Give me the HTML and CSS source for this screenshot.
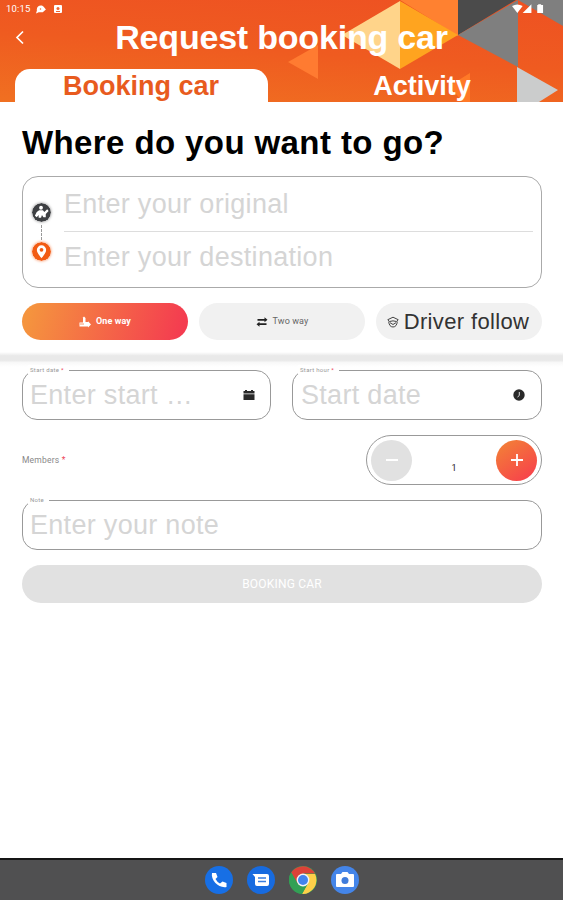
FILE: index.html
```html
<!DOCTYPE html>
<html lang="en">
<head>
<meta charset="utf-8">
<title>Request booking car</title>
<link rel="stylesheet" href="styles.css">
</head>
<body>
<div class="screen">
  <header class="header">
    <svg class="pattern" viewBox="0 0 563 102" aria-hidden="true">
      <path fill="#ff8130" d="M400 0H458V36Z"/>
      <path fill="#ffd48a" d="M400 1V69L342 35Z"/>
      <path fill="#ffa41f" d="M400 1L458 35L400 69Z"/>
      <path fill="#4b4b4b" d="M458 0H516L458 35Z"/>
      <path fill="#7f7f7f" d="M518 0V67L458 35Z"/>
      <path fill="#7f7f7f" d="M518 0H563V26Z"/>
      <path fill="#cbcccc" d="M517 67L558 90L539 102H517Z"/>
      <path fill="#ff7b31" d="M318 45V79L288 62Z"/>
      <path fill="#ff7927" d="M470 73V102H463L449 86Z"/>
    </svg>
    <div class="status">
      <span class="time">10:15</span>
      <svg class="chat" viewBox="0 0 12 10"><path fill="#fff" d="M1 9.500L2 6C1 1 7-1 9.500 2L12 5L8.500 8H4Z"/><circle cx="6" cy="4.500" r=".8" fill="#ef6331"/></svg>
      <svg class="app" viewBox="0 0 8 8"><rect width="8" height="8" rx="1" fill="#fff"/><circle cx="4" cy="3.400" r="1.500" fill="#ef6331"/><path stroke="#ef6331" d="M2 6.500H6"/></svg>
      <svg class="signals" viewBox="0 0 34 10"><path fill="#fff" d="M0 2Q5.500-1.500 11 2L5.500 9ZM20 0V9H11ZM26 1H27V0H30V1H32V9H26Z"/></svg>
    </div>
    <div class="titlebar">
      <svg class="back" viewBox="0 0 10 14"><path d="M8 1L2 7L8 13" fill="none" stroke="#fff" stroke-width="1.700"/></svg>
      <h1>Request booking car</h1>
    </div>
    <nav class="tabs">
      <a class="tab active">Booking car</a>
      <a class="tab">Activity</a>
    </nav>
  </header>

  <main>
    <section class="trip">
      <h2>Where do you want to go?</h2>
      <div class="route">
        <div class="markers">
          <svg class="marker dark" viewBox="0 0 20 20"><circle cx="10" cy="10" r="10" fill="#3d3f42"/><circle cx="9.500" cy="5" r="2" fill="#fff"/><path fill="#fff" d="M7.500 7.500H11.500L13 9.500L16 6.500L17.500 8.500L14.500 11.500V15H12L10.500 12.500L9.500 15.500H7V12.500L5 15L3 13.500L5 9.500Z"/></svg>
          <i class="dash"></i>
          <svg class="marker orange" viewBox="0 0 20 20"><circle cx="10" cy="10" r="10" fill="#f25b13"/><path fill="#fff" fill-rule="evenodd" d="M10 3.500A4.900 4.900 0 0 0 5.100 8.400C5.100 11.700 10 17 10 17S14.900 11.700 14.900 8.400A4.900 4.900 0 0 0 10 3.500ZM10 6.200A2 2 0 1 1 10 10.200A2 2 0 1 1 10 6.200Z"/></svg>
        </div>
        <div class="places">
          <div class="place">Enter your original</div>
          <div class="place">Enter your destination</div>
        </div>
      </div>
      <div class="modes">
        <div class="mode selected"><svg class="mode-icon" viewBox="0 0 12 12"><path fill="#fff" d="M3.500 2L5 .5L6.500 2V6H9V5.200L12 8.500L9 11.500V10.500H.5V6.500H4V2Z"/><path d="M1 8H5" stroke="#f47b43" stroke-width=".8"/></svg>One way</div>
        <div class="mode"><svg class="mode-icon" viewBox="0 0 12 12"><path d="M1.500 3.800H9.500M2.500 8.200H10.500" stroke="#222" stroke-width="1.800"/><path fill="#222" d="M8.500 1.300L11.500 3.800L8.500 6.300ZM3.500 5.700L.5 8.200L3.500 10.700Z"/></svg>Two way</div>
        <div class="mode driver"><svg class="mode-icon" viewBox="0 0 12 12"><path d="M.8 3.700L6 1.200L11.200 3.700L9.500 5.500Q6 4.200 2.500 5.500ZM1.700 5.500C2 9 3.500 11 6 11S10 9 10.300 5.500M3 6.700L6 8.500L9 6.700" fill="none" stroke="#444" stroke-width="1"/></svg>Driver follow</div>
      </div>
    </section>

    <div class="divider"></div>

    <section class="details">
      <div class="pair">
        <div class="field"><span class="label">Start date <b>*</b></span><span>Enter start …</span>
          <svg class="field-icon" viewBox="0 0 12 12"><path fill="#292929" d="M2 1H4V2H8V1H10V2H11.500V4.500H.5V2H2ZM.5 5.200H11.500V11H.5Z"/></svg></div>
        <div class="field"><span class="label">Start hour <b>*</b></span><span>Start date</span>
          <svg class="field-icon" viewBox="0 0 12 12"><circle cx="6" cy="6" r="5.700" fill="#292929"/><path d="M6.300 3V6.500L4.500 8" fill="none" stroke="#ddd"/></svg></div>
      </div>
      <div class="members">
        <span class="members-label">Members <b>*</b></span>
        <div class="stepper">
          <span class="step minus"><svg viewBox="0 0 14 14"><path d="M1 7H13" stroke="#fff" stroke-width="2"/></svg></span>
          <span class="count">1</span>
          <span class="step plus"><svg viewBox="0 0 14 14"><path d="M1 7H13M7 1V13" stroke="#fff" stroke-width="1.800"/></svg></span>
        </div>
      </div>
      <div class="field note"><span class="label">Note</span><span>Enter your note</span></div>
      <div class="submit">BOOKING CAR</div>
    </section>
  </main>

  <footer class="dock">
    <svg viewBox="0 0 28 28"><circle cx="14" cy="14" r="14" fill="#176fe5"/><path fill="#fff" d="M7 7H11L12.500 11L10.500 13Q12 16 15 17.500L17.500 15.500L21.500 17V21C14 22.500 5.500 14.500 7 7Z"/></svg>
    <svg viewBox="0 0 28 28"><circle cx="14" cy="14" r="14" fill="#176be0"/><path fill="#fff" d="M5.500 8H20Q22 8 22 10V18Q22 20 20 20H10Q8 20 8 18V11Z"/><path d="M11 12H19M11 15.500H19" stroke="#397edf" stroke-width="1.300"/></svg>
    <svg viewBox="0 0 28 28"><circle cx="14" cy="14" r="14" fill="#33a055"/><path fill="#fdcf49" d="M14 8H26.100A14 14 0 0 1 13 28L19 17Z"/><path fill="#dc4238" d="M14 14L8.500 17.500L2.200 6.500A14 14 0 0 1 26.200 7.600H14Z"/><path fill="#33a055" d="M2.200 6.500A14 14 0 0 0 13 28L19 17.500L14 20L8.500 17.300Z"/><circle cx="14" cy="14" r="6.400" fill="#f4f4f4"/><circle cx="14" cy="14" r="5" fill="#4284ed"/></svg>
    <svg viewBox="0 0 28 28"><circle cx="14" cy="14" r="14" fill="#4485e9"/><path fill="#fff" d="M6 8H10L11.500 6H16.500L18 8H22Q23 8 23 9V20Q23 21 22 21H6Q5 21 5 20V9Q5 8 6 8Z"/><circle cx="14" cy="14.500" r="3.500" fill="#3f7cdb"/></svg>
  </footer>
</div>
</body>
</html>
```
FILE: styles.css
```css
* { box-sizing: border-box; }
body { margin: 0; background: #fff; font-family: "Liberation Sans", Arial, sans-serif; }
svg { display: block; flex: none; }
h1, h2 { margin: 0; font-weight: 700; }

.screen { width: 563px; height: 900px; display: flex; flex-direction: column; overflow: hidden; }

.header { position: relative; height: 102px; flex: none; background: linear-gradient(184deg, #ee5222 5%, #ef5b20 50%, #f07021 100%); color: #fff; display: flex; flex-direction: column; isolation: isolate; }
.pattern { position: absolute; inset: 0; width: 563px; height: 102px; z-index: -1; }
.status { height: 18px; padding: 0 18px 0 6px; display: flex; align-items: center; }
.time { width: 26px; font: 9.5px/18px Roboto, sans-serif; letter-spacing: .2px; }
.chat { width: 11px; height: 9px; margin-left: 3px; }
.app { width: 8px; height: 8px; margin-left: 8px; }
.signals { width: 33px; height: 10px; margin-left: auto; }
.titlebar { height: 51px; display: grid; grid-template-columns: 30px 1fr 30px; align-items: center; padding-bottom: 13px; }
.back { width: 10px; height: 15px; margin-left: 15px; }
.titlebar h1 { font-size: 34px; line-height: 38px; letter-spacing: -.2px; text-align: center; white-space: nowrap; }
.tabs { display: flex; height: 33px; padding: 0 15px; }
.tab { width: 253px; height: 33px; text-align: center; font-size: 27px; font-weight: 700; line-height: 34px; flex: none; }
.tab:last-child { width: 308px; }
.tab.active { background: #fff; color: #e85b1e; border-radius: 15px 15px 0 0; padding-right: 1px; }

main { flex: 1; }
.trip { padding: 22px 21px 0 22px; }
h2 { color: #000; font-size: 33px; line-height: 38px; letter-spacing: .4px; white-space: nowrap; }
.route { height: 112px; margin-top: 14px; border: 1px solid #aaa; border-radius: 16px; display: flex; padding: 0 8px; }
.markers { width: 20px; display: flex; flex-direction: column; align-items: center; padding-top: 26px; }
.marker { width: 19px; height: 19px; border-radius: 50%; }
.marker.dark { box-shadow: 0 0 3px #888; }
.marker.orange { box-shadow: 0 0 3px #f78651; }
.dash { height: 15px; margin: 3px 0 2px; border-left: 1px dashed #999; }
.places { flex: 1; margin-left: 13px; }
.place { height: 54px; color: #d5d5d5; font-size: 27px; line-height: 54px; letter-spacing: .3px; white-space: nowrap; }
.place:first-child { height: 55px; border-bottom: 1px solid #ddd; }
.place:last-child { line-height: 51px; }
.modes { display: grid; grid-template-columns: repeat(3, 166px); gap: 11px; margin-top: 15px; }
.mode { height: 37px; border-radius: 19px; background: #f1f1f1; color: #666; display: flex; align-items: center; justify-content: center; font: 9px/37px Roboto, sans-serif; letter-spacing: .1px; white-space: nowrap; }
.mode-icon { width: 12px; height: 12px; margin-right: 5px; }
.mode.selected { background: linear-gradient(105deg, #f5943e 5%, #f43c50 95%); color: #fff; font-weight: 700; }
.mode.driver { color: #333; font: 22px/37px "Liberation Sans", Arial, sans-serif; letter-spacing: .35px; padding-right: 2px; }
.divider { height: 15px; margin-top: 12px; background: linear-gradient(#fff, #e9e9e9 25%, #e9e9e9 55%, #f8f8f8 70%, #fff); }

.details { padding: 3px 21px 0 22px; }
.pair { display: grid; grid-template-columns: 249px 250px; justify-content: space-between; }
.field { position: relative; height: 50px; border: 1px solid #999; border-radius: 15px; display: flex; align-items: center; justify-content: space-between; padding: 0 16px 0 8px; color: #d5d5d5; font-size: 27px; line-height: 48px; letter-spacing: .3px; white-space: nowrap; }
.pair .field:first-child { padding: 0 15px 0 7px; }
.label { position: absolute; left: 5px; top: -6px; padding: 0 5px 0 2px; background: #fff; color: #999; font: 6px/9px Roboto, sans-serif; letter-spacing: .3px; }
b { color: #ed4657; font-weight: 400; }
.field-icon { width: 12px; height: 12px; }
.members { height: 50px; margin-top: 15px; display: flex; align-items: center; justify-content: space-between; }
.members-label { color: #888; font: 8.5px/10px Roboto, sans-serif; letter-spacing: .2px; }
.stepper { width: 176px; height: 50px; border: 1px solid #999; border-radius: 25px; display: flex; align-items: center; justify-content: space-between; padding: 0 4px; }
.step { width: 41px; height: 41px; border-radius: 50%; display: grid; place-items: center; }
.step svg { width: 14px; height: 14px; }
.minus { background: #e1e1e1; }
.plus { background: linear-gradient(145deg, #f37a39 15%, #f7424b 90%); }
.count { color: #222; font: 9px/12px Roboto, sans-serif; padding-top: 16px; }
.note { margin-top: 15px; padding-left: 7px; }
.submit { height: 38px; margin-top: 15px; border-radius: 19px; background: #e1e1e1; color: #fff; font: 12px/39px Roboto, sans-serif; letter-spacing: .2px; text-align: center; }

.dock { height: 42px; flex: none; border-top: 2px solid #151515; background: #505051; display: flex; align-items: center; justify-content: center; gap: 14px; }
.dock svg { width: 28px; height: 28px; }
```
